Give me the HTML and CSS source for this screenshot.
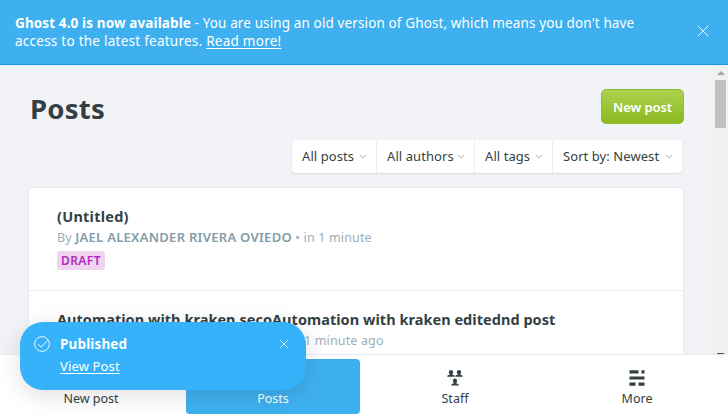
FILE: index.html
```html
<!DOCTYPE html>
<html lang="en">
<head>
<meta charset="utf-8">
<title>Posts</title>
<link rel="stylesheet" href="styles.css">
</head>
<body>
<div class="app">
  <header class="banner">
    <p class="banner-text"><b>Ghost 4.0 is now available</b> - You are using an old version of Ghost, which means you don't have<br><span class="banner-second">access to the latest features. <a>Read more!</a></span></p>
    <svg class="banner-close" viewBox="0 0 12 12"><path d="M.5.5l11 11M11.5.5l-11 11"/></svg>
  </header>
  <div class="viewport">
    <main class="content">
      <div class="heading">
        <h1>Posts</h1>
        <button class="new-post">New post</button>
      </div>
      <div class="filters">
        <div class="filter f-posts"><span>All posts</span><svg viewBox="0 0 8 5"><path d="M1 .8l3 3 3-3"/></svg></div>
        <div class="filter f-authors"><span>All authors</span><svg viewBox="0 0 8 5"><path d="M1 .8l3 3 3-3"/></svg></div>
        <div class="filter f-tags"><span>All tags</span><svg viewBox="0 0 8 5"><path d="M1 .8l3 3 3-3"/></svg></div>
        <div class="filter f-sort"><span>Sort by: Newest</span><svg viewBox="0 0 8 5"><path d="M1 .8l3 3 3-3"/></svg></div>
      </div>
      <section class="list">
        <article class="post">
          <h2 class="untitled">(Untitled)</h2>
          <p class="meta">By <b>JAEL ALEXANDER RIVERA OVIEDO</b> • in 1 minute</p>
          <span class="badge">DRAFT</span>
        </article>
        <article class="post">
          <h2>Automation with kraken secoAutomation with kraken editednd post</h2>
          <p class="meta ago">1 minute ago</p>
        </article>
      </section>
    </main>
    <div class="scrollbar"><i class="up"></i><i class="thumb"></i><i class="down"></i></div>
  </div>
  <nav class="nav">
    <a class="tab"><span class="icon"></span><span>New post</span></a>
    <a class="tab active"><span class="icon"></span><span>Posts</span></a>
    <a class="tab"><svg class="icon staff" viewBox="0 0 16 16">
      <defs><g id="person"><ellipse cx="3.5" cy="2.3" rx="2.1" ry="2.3"/><path d="M2.4 3.5h2.2v1.1l2 .7q.6.3.6 1.5H-.2q0-1.2.6-1.5l2-.7z"/></g></defs>
      <use href="#person" x=".5" y="0"/><use href="#person" x="8.5" y="0"/><use href="#person" x="4.5" y="8.6"/>
      <path class="link" d="M2.5 7.6l2.2 2.6M13.5 7.6l-2.2 2.6"/></svg><span>Staff</span></a>
    <a class="tab"><svg class="icon" viewBox="0 0 16 16"><path d="M.5.3h9v3.2h-9zM12.5.3h3v3.2h-3zM.5 6.4h15v3.2H.5zM.5 12.5h6v3.2h-6zM9.5 12.5h6v3.2h-6z"/></svg><span>More</span></a>
  </nav>
  <aside class="toast">
    <svg class="check" viewBox="0 0 16 16"><circle cx="8" cy="8" r="7.4"/><path d="M4.3 8.2l3 2.9 6.4-7"/></svg>
    <div class="toast-body"><b>Published</b><a>View Post</a></div>
    <svg class="toast-close" viewBox="0 0 8 8"><path d="M.2.2l7.6 7.6M7.8.2L.2 7.8"/></svg>
  </aside>
</div>
</body>
</html>
```

FILE: styles.css
```css
* { box-sizing: border-box; }
body { margin: 0; font-family: "Noto Sans", sans-serif; color: #343f44; overflow: hidden; }
h1, h2, p { margin: 0; white-space: nowrap; }
svg { fill: none; stroke: currentColor; flex: none; display: block; }
.app { position: relative; width: 728px; height: 418px; display: flex; flex-direction: column; background: #f2f3f7; }
.banner { height: 65px; flex: none; display: flex; justify-content: space-between; align-items: flex-start; padding: 14px 19px 0 15px; background: #3eb0ef; border-bottom: 1px solid #1a9ae6; color: #fff; }
.banner-text { font-size: 13.5px; line-height: 18px; letter-spacing: .12px; }
.banner-second { letter-spacing: .25px; }
.banner-text a, .toast a { text-decoration: underline; text-underline-offset: 2px; }
.banner-close { width: 12px; height: 12px; margin-top: 11px; stroke-width: .9; }
.viewport { height: 289px; flex: none; display: flex; overflow: hidden; }
.content { width: 713px; padding: 24px 29px 0; }
.heading { display: flex; justify-content: space-between; align-items: center; height: 35px; }
h1 { font-size: 27.5px; line-height: 35px; letter-spacing: .25px; margin: 3px 0 0 1px; }
.new-post { width: 83px; height: 35px; padding: 0; border: 1px solid #92be2b; border-radius: 5px; background: linear-gradient(#acd34f, #8cb820); color: #fff; font: 600 13px "Noto Sans", sans-serif; letter-spacing: -.1px; white-space: nowrap; }
.filters { display: flex; width: 390px; height: 33px; margin: 16px 0 0 263px; background: #fff; border-radius: 4px; box-shadow: 0 1px 2px #0000001a; }
.filter { display: flex; justify-content: space-between; align-items: center; padding: 0 10px; font-size: 13px; white-space: nowrap; border-left: 1px solid #edf0f3; }
.filter span { margin-bottom: 2px; letter-spacing: .07px; }
.filter svg { width: 8px; height: 5px; color: #a4afb5; margin-right: -1px; }
.f-posts { width: 84px; border-left: 0; }
.f-authors { width: 98px; }
.f-tags { width: 78px; }
.f-sort { width: 130px; }
.list { width: 654px; height: 300px; margin-top: 15px; border-radius: 5px; background: #fff; box-shadow: 0 0 0 1px #e7edf3; }
.post { height: 103px; padding: 18px 28px 0; border-bottom: 1px solid #e3eef6; }
h2 { font-size: 14.5px; line-height: 20px; letter-spacing: .04px; }
.untitled { letter-spacing: .25px; }
.meta { font-size: 12.5px; line-height: 18px; letter-spacing: .15px; margin-top: 2px; color: #9baeb8; }
.meta b { font-size: 13px; font-weight: 600; letter-spacing: .29px; color: #839ba8; }
.meta.ago { margin: 3px 0 0 247px; }
.badge { display: flex; align-items: center; justify-content: center; width: 48px; height: 19px; margin-top: 4px; border-radius: 3px; background: #efd4f1; color: #b02cbb; font-size: 12px; font-weight: 600; letter-spacing: .4px; }
.scrollbar { width: 15px; background: #f1f1f1; display: flex; flex-direction: column; align-items: center; }
.up { border: 4px solid transparent; border-top: 0; border-bottom: 4px solid #a3a3a3; margin-top: 6px; }
.thumb { width: 11px; height: 48px; margin-top: 5px; background: #c1c1c1; }
.down { width: 7px; height: 1px; margin-top: auto; background: #505050; }
.nav { height: 64px; flex: none; display: grid; grid-template-columns: repeat(4, 1fr); background: #fff; border-top: 1px solid #e3ecf3; }
.tab { display: flex; flex-direction: column; align-items: center; margin: 4px; padding-top: 11px; border-radius: 4px; font-size: 12.5px; line-height: 18px; white-space: nowrap; }
.icon { width: 16px; height: 16px; margin-bottom: 4px; fill: currentColor; stroke: none; }
.staff { overflow: visible; }
.link { stroke: #a7afb3; stroke-width: .6; }
.active { background: #3eb0ef; color: #fff; }
.toast { position: absolute; left: 20px; top: 322px; width: 286px; height: 68px; display: flex; padding: 14px 18px 0 14px; border-radius: 23px; background: #35b2f9; color: #fff; box-shadow: 0 5px 24px #00000022; }
.check { width: 16px; height: 16px; stroke-width: .9; }
.toast-body { display: flex; flex-direction: column; align-items: flex-start; flex: 1; margin-left: 10px; margin-top: -3px; font-size: 13.5px; line-height: 22px; letter-spacing: .15px; }
.toast-body a { font-size: 13px; line-height: 22px; }
.toast-close { width: 8px; height: 8px; margin-top: 4px; stroke-width: .8; }
```
